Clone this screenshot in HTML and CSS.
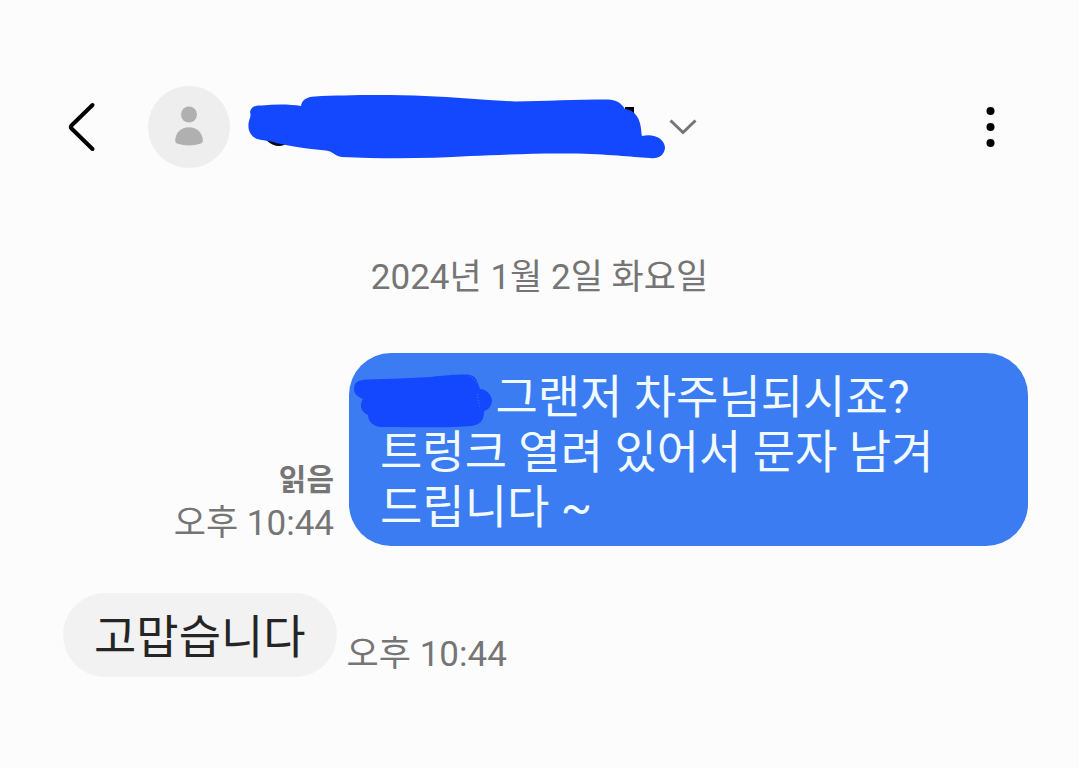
FILE: index.html
```html
<!DOCTYPE html>
<html lang="ko">
<head>
    <meta charset="UTF-8">
    <meta name="viewport" content="width=device-width, initial-scale=1.0">
    <title>메시지</title>
    <link rel="stylesheet" href="styles.css">
</head>
<body>
    <header class="header">
        <button class="icon-button" type="button" aria-label="뒤로">
            <svg width="30" height="52" viewBox="0 0 30 52" fill="none" stroke="#000" stroke-width="4" stroke-linecap="round" stroke-linejoin="round">
                <path d="M25.500 4 L4.500 24.500 Q3 26 4.500 27.500 L25.500 48"/>
            </svg>
        </button>
        <div class="avatar">
            <svg width="82" height="82" viewBox="-1 0 82 82" fill="#b0b0b0">
                <circle cx="40" cy="28.500" r="8"/>
                <path d="M26.200 55 C26.200 47 32 41.300 40 41.300 C48 41.300 53.800 47 53.800 55 Q53.800 56.600 52 57.400 Q40 61.600 28 57.400 Q26.200 56.600 26.200 55 Z"/>
            </svg>
        </div>
        <button class="contact" type="button" aria-label="연락처 정보">
            <!-- Hidden contact name -->
            <svg width="418" height="66" viewBox="248 94 418 66">
                <path d="M266 140 Q278 151 289 142 Z" fill="#05051a"/>
                <path d="M625 107 H634 V113 H625 Z" fill="#000"/>
                <path fill="#1448ff" d="M250 112 C251 107 255 105 262 105.500 C275 104 290 104 301 106 C302 100 306 97 315 96.500 C345 95 390 94.500 425 96 C455 97 485 100 515 101.500 C545 101 575 99.500 608 99.500 C616 99.500 621 103 625 109 C635 110 641 118 641.500 134 L642 136 C654 133 665 139 665 148 C664 156 658 159 650 158 C630 157 610 154 570 153.500 C535 153 500 155 470 156 C430 158.500 385 159 342 157 C335 156 332 151 326 150.500 C306 149 290 146 276 143 C269 140 263 141 257 139 C250 136 246 128 250 118 Q251 115 250 112 Z"/>
            </svg>
            <svg width="30" height="18" viewBox="0 0 30 18" fill="none" stroke="#757575" stroke-width="3">
                <path d="M2.500 2.500 L15 14.500 L27.500 2.500"/>
            </svg>
        </button>
        <button class="icon-button" type="button" aria-label="더보기">
            <svg width="12" height="44" viewBox="0 0 12 44">
                <circle cx="5.500" cy="6" r="4"/>
                <circle cx="5.500" cy="22" r="4"/>
                <circle cx="5.500" cy="38" r="4"/>
            </svg>
        </button>
    </header>

    <main class="chat">
        <p class="date">2024년 1월 2일 화요일</p>

        <div class="message sent">
            <div class="meta">
                <span class="read">읽음</span>
                <span class="time">오후 10:44</span>
            </div>
            <p class="bubble">
                <span class="hidden-word">
                    <svg class="scribble" width="140" height="56" viewBox="353 373 140 56">
                        <path fill="#1448ff" d="M354 389 C354 382 358 380 367 379.500 C390 379 410 378 431 377 C448 375 464 374 470 375 C474 376 476 378 477 381 L480 389 C486 389 491 394 492 400 C492 406 488 410 484 411 C484 419 482 424 472 426 C450 428 420 427 382 427 C373 427 368 421 368 415 C361 412 359 405 363 399 C358 397 354 394 354 389 Z"/>
                        <path fill="none" stroke="#3b7cf2" stroke-width="1" stroke-dasharray="1 2" d="M470 376 L477 383 M477 394 L480 408"/>
                    </svg>
                </span>
                그랜저 차주님되시죠? 트렁크 열려 있어서 문자 남겨 드립니다 ~
            </p>
        </div>

        <div class="message received">
            <p class="bubble">고맙습니다</p>
            <div class="meta">
                <span class="time">오후 10:44</span>
            </div>
        </div>
    </main>
</body>
</html>
```
FILE: styles.css
```css
body {
    font-family: Roboto, "Noto Sans CJK KR", sans-serif;
    background-color: #fcfcfc;
    color: #757575;
    margin: 0;
}
button {
    background: none;
    border: none;
    padding: 0;
    cursor: pointer;
}
svg {
    display: block;
}
.header {
    display: flex;
    align-items: center;
    padding: 86px 82px 0 67px;
}
.avatar {
    margin: 0 18px 0 51px;
    border-radius: 50%;
    background-color: #eeeeee;
}
.contact {
    display: flex;
    align-items: center;
    gap: 2px;
    margin-right: auto;
}
.chat {
    padding-top: 82px;
}
.date {
    margin: 0 0 48px;
    font-size: 35px;
    line-height: 55px;
    text-align: center;
}
.message {
    display: flex;
    align-items: flex-end;
    margin: 0 51px 47px 63px;
}
.sent {
    justify-content: flex-end;
    gap: 15px;
}
.received {
    gap: 10px;
}
.bubble {
    margin: 0;
    padding: 17px 31px 12px;
    border-radius: 42px;
    font-size: 46px;
    line-height: 55px;
    word-break: keep-all;
}
.sent .bubble {
    flex: 1;
    max-width: 617px;
    padding-bottom: 11px;
    background-color: #3b7cf2;
    color: #f0faff;
}
.received .bubble {
    background-color: #f2f2f2;
    color: #252525;
}
.hidden-word {
    display: inline-block;
    position: relative;
    width: 104px;
    height: 32px;
}
.scribble {
    position: absolute;
    left: -27px;
    top: -8px;
}
.meta {
    display: flex;
    flex-direction: column;
    align-items: flex-end;
    flex-shrink: 0;
    line-height: 44px;
}
.read {
    font-size: 30px;
    font-weight: bold;
}
.time {
    font-size: 35px;
}
```
